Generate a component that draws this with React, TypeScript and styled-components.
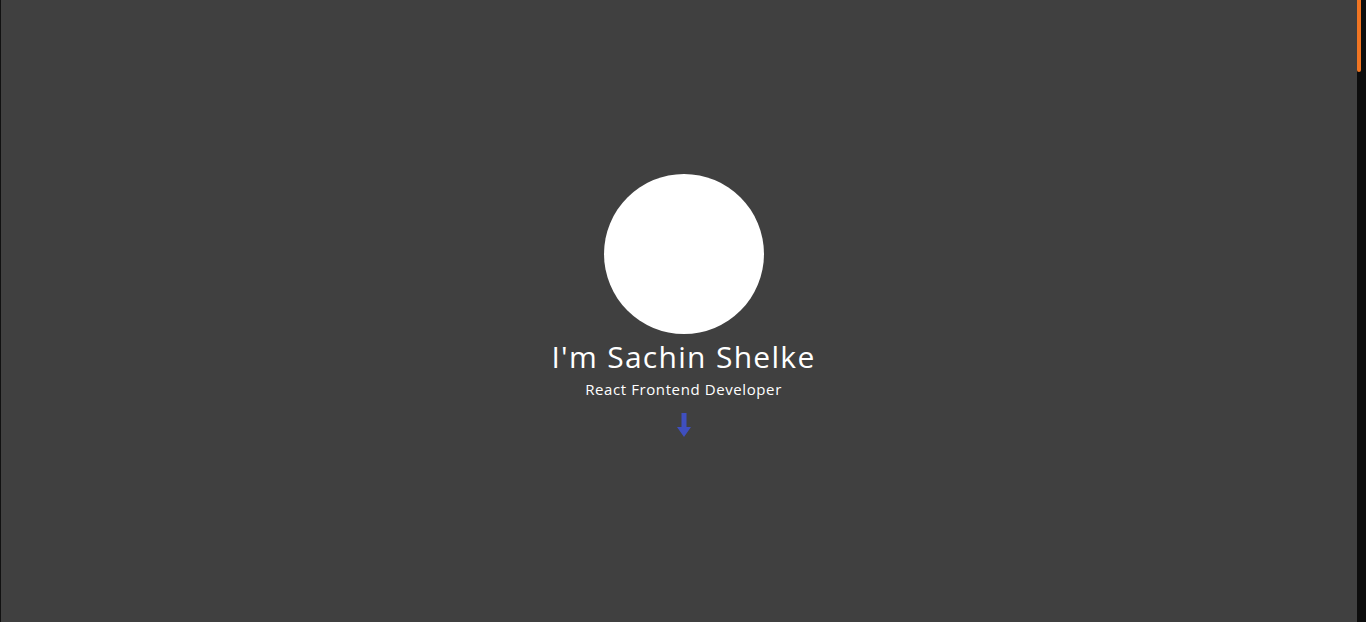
import React from "react";
import styled, { createGlobalStyle } from "styled-components";

const Global = createGlobalStyle`
  html, body { margin: 0; padding: 0; background: #404040; overflow: hidden; }
  * { box-sizing: border-box; }
`;

const Page = styled.main`
  position: relative;
  width: 100%;
  height: 622px;
  background: #404040;
  border-left: 1px solid #111;
  display: flex;
  flex-direction: column;
  align-items: center;
  padding-top: 174px;
  font-family: "Open Sans", "Liberation Sans", sans-serif;
  color: #fff;
`;

const Avatar = styled.div`
  width: 160px;
  height: 160px;
  border-radius: 50%;
  background: #fff;
`;

const Title = styled.h1`
  margin: 5px 0 0;
  font-size: 30px;
  font-weight: 400;
  line-height: 36px;
  letter-spacing: 1.3px;
`;

const Subtitle = styled.p`
  margin: 4px 0 0;
  font-size: 15px;
  font-weight: 400;
  line-height: 20px;
  letter-spacing: 0.6px;
`;

const ArrowWrap = styled.div`
  margin-top: 14px;
  width: 16px;
  height: 24px;
  display: flex;
`;

const ScrollTrack = styled.div`
  position: fixed;
  top: 0;
  right: 0;
  width: 9px;
  height: 622px;
  background: #0d0d0d;
`;

const ScrollThumb = styled.div`
  width: 4px;
  height: 72px;
  background: #f07522;
  border-radius: 0 0 2px 2px;
`;

export default function App() {
  return (
    <>
      <Global />
      <Page>
        <Avatar />
        <Title>I'm Sachin Shelke</Title>
        <Subtitle>React Frontend Developer</Subtitle>
        <ArrowWrap>
          <svg width="16" height="24" viewBox="0 0 16 24">
            <path d="M5.5 0 H10.5 V14 H15 L8 24 L1 14 H5.5 Z" fill="#3f4fbf" />
          </svg>
        </ArrowWrap>
        <ScrollTrack>
          <ScrollThumb />
        </ScrollTrack>
      </Page>
    </>
  );
}
